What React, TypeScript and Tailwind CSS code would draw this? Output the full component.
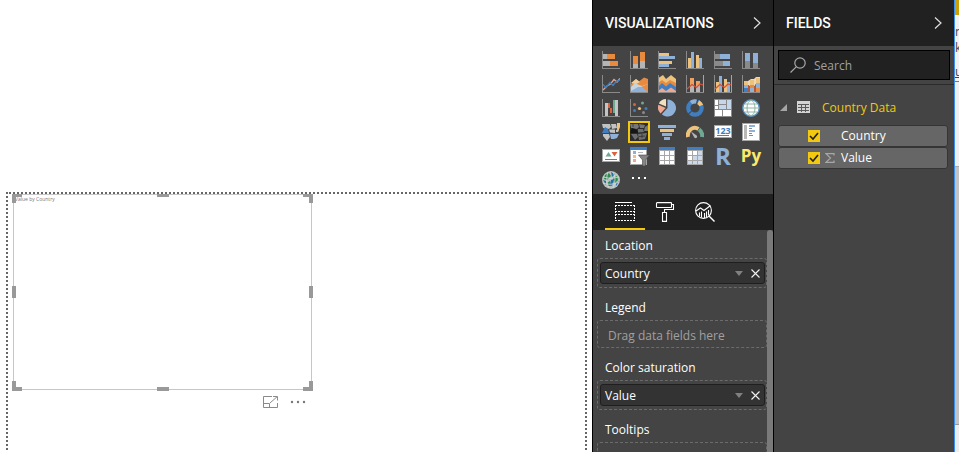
import React, { useState, type ReactNode } from "react";

type BoxSpec = [number, number, number, number, string];

const GRAY = "#8a8a8a";
const SILVER = "#b5b5b5";
const ORANGE = "#e88b3f";
const SAND = "#ecc27c";
const SKY = "#8fb1d8";
const BLUE = "#3f7fc1";
const RED = "#d9623f";
const SALMON = "#eda893";
const GREEN = "#6fa893";

function Boxes({ items }: { items: BoxSpec[] }) {
  return (
    <g shapeRendering="crispEdges">
      {items.map(([x, y, w, h, fill], i) => (
        <rect key={i} x={x} y={y} width={w} height={h} fill={fill} />
      ))}
    </g>
  );
}

function Glyph({ axes, children }: { axes?: boolean; children: ReactNode }) {
  return (
    <svg viewBox="0 0 18 18" className="block size-[18px] shrink-0" fill="none" aria-hidden="true">
      {children}
      {axes && <Boxes items={[[0, 0, 1, 18, GRAY], [0, 17, 18, 1, GRAY]]} />}
    </svg>
  );
}

const chart = (items: BoxSpec[], extra?: ReactNode) => (
  <Glyph axes>
    <Boxes items={items} />
    {extra}
  </Glyph>
);

const comboLine = (
  <>
    <path d="M1 14 L6 9.5 L10.5 12.5 L14 9 L17 10" stroke="#dd4f36" strokeWidth="1.2" />
    <Boxes items={[[17, 0, 1, 17, "#e0965a"]]} />
  </>
);

function SheetGrid({ shaded }: { shaded?: boolean }) {
  return (
    <Glyph>
      <Boxes
        items={[
          [1, 0, 16, 18, "#a6a6a6"],
          [1, 0, 16, 3, BLUE],
          ...[2, 7, 12].flatMap((x) =>
            [4, 9, 14].map(
              (y): BoxSpec => [x, y, 4, y === 14 ? 3 : 4, shaded && (x + y > 15) ? "#ccd9ea" : "#ffffff"],
            ),
          ),
        ]}
      />
    </Glyph>
  );
}

const visuals: { name: string; art: ReactNode; selected?: boolean }[] = [
  {
    name: "Stacked bar chart",
    art: chart([[1, 3, 4, 5, SILVER], [5, 3, 8, 5, ORANGE], [1, 10, 7, 5, SILVER], [8, 10, 8, 5, ORANGE]]),
  },
  {
    name: "Stacked column chart",
    art: chart([[3, 5, 5, 8, ORANGE], [3, 13, 5, 4, SILVER], [10, 1, 5, 9, ORANGE], [10, 10, 5, 7, SILVER]]),
  },
  {
    name: "Clustered bar chart",
    art: chart([[1, 2, 10, 3, SAND], [1, 5, 16, 3, SKY], [1, 10, 13, 3, SAND], [1, 13, 10, 3, SKY]]),
  },
  {
    name: "Clustered column chart",
    art: chart([[2, 7, 3, 10, SAND], [5, 1, 3, 16, SKY], [10, 4, 3, 13, SAND], [13, 7, 3, 10, SKY]]),
  },
  {
    name: "100% stacked bar chart",
    art: chart([[1, 3, 5, 5, GRAY], [6, 3, 10, 5, SKY], [1, 10, 8, 5, GRAY], [9, 10, 7, 5, SKY]]),
  },
  {
    name: "100% stacked column chart",
    art: chart([[3, 2, 5, 8, SKY], [3, 10, 5, 7, GRAY], [11, 2, 5, 10, SKY], [11, 12, 5, 5, GRAY]]),
  },
  {
    name: "Line chart",
    art: chart(
      [],
      <>
        <path d="M1 15 L5 11 L8.5 9 L12 4.5 L15 7 L18 3.5" stroke="#e2a18f" strokeWidth="1.4" />
        <path d="M1 9.5 L4 12.5 L8 7.5 L11 10.5 L14 6.5 L18 5" stroke={BLUE} strokeWidth="1.4" />
      </>,
    ),
  },
  {
    name: "Area chart",
    art: chart(
      [],
      <>
        <path d="M1 9 L6 4 L9 6.5 L14 2.5 L18 4 V17 H1Z" fill={ORANGE} />
        <path d="M1 8 L6 4 L10 7 L6 9Z" fill="#f3cf9b" />
        <path d="M1 12 L5 8 L9 10 L12 11 L18 9 V17 H1Z" fill="#c6d4e0" />
        <path d="M11 12 L18 9 V17 H15Z" fill={ORANGE} />
        <path d="M1 16 L8 12 L12 12 L18 17 H1Z" fill={SKY} />
      </>,
    ),
  },
  {
    name: "Stacked area chart",
    art: (
      <Glyph>
        <path d="M-1 4 L5 0 L8 4 L13 0 L18 4 V17 H0Z" fill={SAND} />
        <path d="M0 8 L4 5 L8 8 L12 5 L18 8 V17 H0Z" fill={ORANGE} />
        <path d="M0 12 L4 8 L8 11.5 L12 8 L18 12 V17 H0Z" fill={BLUE} />
        <path d="M0 16 L4 13 L8 16 L13 12.5 L18 16 V17 H0Z" fill={SALMON} />
        <Boxes items={[[0, 0, 1, 18, GRAY], [0, 17, 18, 1, GRAY]]} />
      </Glyph>
    ),
  },
  {
    name: "Line and stacked column chart",
    art: chart([[4, 3, 4, 8, "#f0a05f"], [4, 11, 4, 6, SILVER], [10, 6, 4, 5, "#f0a05f"], [10, 11, 4, 6, SILVER]], comboLine),
  },
  {
    name: "Line and clustered column chart",
    art: chart([[2, 7, 3, 10, SAND], [5, 1, 3, 16, SKY], [10, 4, 3, 13, SAND], [13, 7, 3, 10, SKY]], comboLine),
  },
  {
    name: "Ribbon chart",
    art: chart(
      [],
      <>
        <path d="M2 6 H6 L9 4 H12 L14 2 H18 V9 H14 L12 12 H9 L6 10 H2Z" fill="#f0d9b0" />
        <path d="M2 10 H6 L9 12 H12 L14 9 H18 V17 H2Z" fill="#b0573c" />
        <Boxes
          items={[
            [2, 6, 4, 4, SAND], [2, 10, 4, 3, SKY], [2, 13, 4, 4, BLUE],
            [8, 5, 4, 5, SAND], [8, 10, 4, 3, ORANGE], [8, 13, 4, 4, SKY],
            [14, 3, 4, 5, SAND], [14, 8, 4, 5, SKY], [14, 13, 4, 4, ORANGE],
          ]}
        />
      </>,
    ),
  },
  {
    name: "Waterfall chart",
    art: chart([
      [3, 4, 3, 13, "#c4c4c4"], [6, 4, 2, 5, RED], [8, 9, 2, 5, RED], [11, 1, 2, 13, GREEN], [13, 1, 3, 16, "#c4c4c4"],
    ]),
  },
  {
    name: "Scatter chart",
    art: chart(
      [],
      <>
        <circle cx="4.5" cy="5.5" r="1.5" fill={RED} />
        <circle cx="12.5" cy="4" r="1.5" fill={GREEN} />
        <circle cx="9.5" cy="9.5" r="1.6" fill={SAND} />
        <circle cx="16" cy="9.5" r="1.5" fill={BLUE} />
        <circle cx="4.5" cy="11.5" r="1.5" fill={BLUE} />
        <circle cx="13.5" cy="13.5" r="1.5" fill={GRAY} />
      </>,
    ),
  },
  {
    name: "Pie chart",
    art: (
      <Glyph>
        <path d="M9.5 9 V0.5 A8.5 8.5 0 1 1 3.8 15.3Z" fill={SKY} />
        <path d="M8 7.5 L0.8 4.5 A8.2 8.2 0 0 1 8 0Z" fill="#f2dfc0" />
        <path d="M7.7 9 L2.6 14.5 A8.3 8.3 0 0 1 0.4 5.8Z" fill={SALMON} />
      </Glyph>
    ),
  },
  {
    name: "Donut chart",
    art: (
      <Glyph>
        <circle cx="9" cy="9" r="6.7" stroke={BLUE} strokeWidth="4.2" strokeDasharray="15.5 1" />
        <path d="M5 3.6 A6.7 6.7 0 0 1 10.5 2.5" stroke={SKY} strokeWidth="4.2" />
        <path d="M12.2 3.1 A6.7 6.7 0 0 1 15.2 6.5" stroke={SAND} strokeWidth="4.2" />
        <path d="M11.9 0 L10.6 5" stroke="#444" strokeWidth="1" />
      </Glyph>
    ),
  },
  {
    name: "Treemap",
    art: (
      <Glyph>
        <Boxes
          items={[
            [0, 0, 18, 18, "#8a8a8a"], [1, 1, 3, 5, "#fff"], [1, 7, 3, 3, "#fff"], [5, 1, 7, 4, "#c6d7ec"],
            [5, 6, 7, 4, "#c6d7ec"], [13, 1, 4, 9, "#c6d7ec"], [1, 11, 7, 6, "#fff"], [9, 11, 8, 6, "#fff"],
          ]}
        />
      </Glyph>
    ),
  },
  {
    name: "Map",
    art: (
      <Glyph>
        <circle cx="9" cy="9" r="8.2" fill="#fff" stroke="#5b92bb" strokeWidth="1.4" />
        <g stroke="#8fb5a6" strokeWidth="1">
          <ellipse cx="9" cy="9" rx="4" ry="7.5" />
          <path d="M1.5 9 H16.5 M3 5 H15 M3 13 H15" />
        </g>
      </Glyph>
    ),
  },
  {
    name: "Filled map",
    art: (
      <Glyph>
        <path d="M0 1 H8 L9 4 L7 6 L1 5Z M9 1 H14 L15 5 L10 6Z M1 11 L7 11 L8 14 L5 18 L1 13Z M14 7 L17 6 L16 9 L14 9Z" fill="#c2c2c2" />
        <path d="M0 10 L3 4 L6 6 L7 10Z" fill={BLUE} />
        <path d="M7 6.5 H13 V10 L8 9.5Z" fill="#c2c2c2" />
        <path d="M8 11 L13 11 L17 11 L15 15 L12 16 L9 16Z" fill={SKY} />
        <path d="M15 0 H18 V4 L16 9 L15 6Z" fill={SAND} />
      </Glyph>
    ),
  },
  {
    name: "Shape map",
    selected: true,
    art: (
      <Glyph>
        <path d="M0 1 H8 L9 4 L7 6 L1 5Z M9 1 L15 2 L14 5 L10 5Z M15 4 L18 2 V8 L14 8Z" fill="#777" />
        <path d="M0 10 L2 5 L7 7 L8 10Z" fill="#151515" />
        <path d="M8 6 H13 L14 9 L8 9.5Z M1 11 L7 11 L8 14 L5 17Z M8 11 L17 10 L15 16 L9 17Z" fill="#6e6e6e" />
        <path d="M3 1 V4 M12 11 V15 M9 13.5 L15 13" stroke="#303030" strokeWidth="0.8" />
      </Glyph>
    ),
  },
  {
    name: "Funnel",
    art: (
      <Glyph>
        <Boxes items={[[0, 2, 18, 3, SKY], [2, 6, 14, 3, SAND], [4, 10, 10, 3, SKY], [6, 14, 6, 3, SKY]]} />
      </Glyph>
    ),
  },
  {
    name: "Gauge",
    art: (
      <Glyph>
        <path d="M2 14 A7 7.5 0 0 1 12.5 6" stroke={SAND} strokeWidth="4" />
        <path d="M13 6.3 A7 7.5 0 0 1 16 14" stroke={GREEN} strokeWidth="4" />
        <path d="M5 8.5 L10 12 A1.6 1.6 0 1 1 8 14Z" fill={SILVER} />
      </Glyph>
    ),
  },
  {
    name: "Card",
    art: (
      <Glyph>
        <Boxes items={[[0, 2, 18, 13, "#a6a6a6"], [1, 3, 16, 11, "#fff"], [3, 12, 12, 1, "#777"]]} />
        <text x="9" y="11" fontSize="9" fontWeight="700" textAnchor="middle" fill={BLUE} fontFamily="Open Sans, sans-serif">
          123
        </text>
      </Glyph>
    ),
  },
  {
    name: "Multi-row card",
    art: (
      <Glyph>
        <Boxes
          items={[
            [0, 0, 18, 18, "#a6a6a6"], [1, 1, 16, 16, "#fff"], [2, 2, 3, 14, "#b8b8b8"], [7, 2, 6, 2, SKY],
            [7, 5, 3, 1, GRAY], [7, 7, 6, 2, SKY], [7, 10, 3, 1, GRAY], [7, 12, 4, 1, GRAY],
          ]}
        />
      </Glyph>
    ),
  },
  {
    name: "KPI",
    art: (
      <Glyph>
        <Boxes items={[[0, 2, 18, 13, "#a6a6a6"], [1, 3, 16, 11, "#fff"], [3, 12, 12, 1, "#777"]]} />
        <path d="M3.5 9.5 L6.5 5 L9.5 9.5Z" fill={GREEN} />
        <path d="M9.5 5 H15.5 L12.5 9.5Z" fill={RED} />
      </Glyph>
    ),
  },
  {
    name: "Slicer",
    art: (
      <svg viewBox="0 0 20 19" className="-mr-0.5 -mb-px block h-[19px] w-5 shrink-0" aria-hidden="true">
        <Boxes
          items={[
            [0, 0, 17, 18, "#a6a6a6"], [1, 3, 15, 14, "#fff"], [0, 0, 17, 3, BLUE], [3, 4, 3, 3, SKY],
            [3, 8, 3, 3, SAND], [3, 12, 3, 3, SALMON], [8, 5, 5, 1, SILVER],
          ]}
        />
        <path d="M8.5 8 H19.5 L15.5 13 V19 H12.5 V13Z" fill="#858585" stroke="#444" strokeWidth="0.6" />
      </svg>
    ),
  },
  { name: "Table", art: <SheetGrid /> },
  { name: "Matrix", art: <SheetGrid shaded /> },
  { name: "R script visual", art: <span className="text-[24px] leading-[18px] font-bold text-[#8fb1d8]">R</span> },
  { name: "Python visual", art: <span className="text-[17px] leading-[18px] font-bold text-[#fbe96b]">Py</span> },
  {
    name: "ArcGIS map",
    art: (
      <Glyph>
        <circle cx="9" cy="9" r="9" fill="#b9c0c0" />
        <path d="M3 4 L7 2 L9 5 L5 9 L2 8Z M11 7 L15 5 L16 9 L12 13Z M5 12 L8 10 L9 15 L6 15Z" fill="#2f8a50" />
        <path d="M9 1 L13 3 L10 6Z M1 9 L4 10 L4 14Z M9 9 L12 8 L10 15 L8 14Z M14 12 L17 10 L14 15Z" fill="#2471a8" />
        <g stroke="#d5dada" strokeWidth="0.8">
          <path d="M1 6 Q9 9 17 6 M1 12 Q9 15 17 11 M6 1 Q3 9 7 17 M11 1 Q15 8 11 17" />
        </g>
      </Glyph>
    ),
  },
  {
    name: "Import custom visual",
    art: (
      <Glyph>
        <Boxes items={[[2, 6, 2, 2, "#fff"], [8, 6, 2, 2, "#fff"], [14, 6, 2, 2, "#fff"]]} />
      </Glyph>
    ),
  },
];

function Chevron() {
  return (
    <svg viewBox="0 0 8 12" className="h-3 w-2" fill="none" stroke="#e0e0e0" strokeWidth="1.2" aria-hidden="true">
      <path d="M1 0.5 L7 6 L1 11.5" />
    </svg>
  );
}

function PaneHeader({ title }: { title: string }) {
  return (
    <header className="flex h-[46px] shrink-0 items-center justify-between bg-[#212121] px-3">
      <h2 className="font-['Roboto',sans-serif] text-[14px] leading-5 font-medium text-white">{title}</h2>
      <button type="button" aria-label={`Collapse ${title}`} className="flex">
        <Chevron />
      </button>
    </header>
  );
}

const tabs = [
  {
    name: "Fields",
    art: (
      <svg viewBox="0 0 20 20" className="size-5" fill="none" stroke="#fff" shapeRendering="crispEdges" aria-hidden="true">
        <path d="M0 0.5 H17" />
        <path d="M0.5 3 V19 M19.5 3 V19" strokeDasharray="2 1" />
        <path d="M0 3.5 H20 M0 9.5 H20 M0 12.5 H20 M0 18.5 H20" strokeDasharray="2 1" />
      </svg>
    ),
  },
  {
    name: "Format",
    art: (
      <svg viewBox="0 0 20 20" className="size-5" fill="none" stroke="#fff" strokeWidth="1.1" aria-hidden="true">
        <rect x="1.5" y="0.6" width="15" height="4.9" rx="0.6" />
        <path d="M16.5 2.5 H18.5 V7.5 H9.5 V10.5" />
        <path d="M7.5 10.5 H11.5 V19.4 H7.5Z" />
      </svg>
    ),
  },
  {
    name: "Analytics",
    art: (
      <svg viewBox="0 0 20 20" className="size-5" fill="none" stroke="#fff" strokeWidth="1.1" aria-hidden="true">
        <circle cx="8.5" cy="8.5" r="7.9" />
        <path d="M14 14 L19.5 19.5" strokeWidth="1.4" />
        <path d="M1 9 L5.5 6 L9 8.5 L15.5 3.5" />
        <path d="M4.5 10.5 V14.5 M6.5 9.5 V15.5 M9.5 11 V16 M11.5 9.5 V15.5 M13.5 8 V13.5" />
      </svg>
    ),
  },
];

function Bucket({ label, field, hint }: { label: string; field?: string; hint?: string }) {
  return (
    <section className="pt-2.5">
      <h3 className="pl-3 text-[12px] leading-5 text-white">{label}</h3>
      <div className="mt-0.5 ml-1 min-h-7 rounded-[3px] border border-dashed border-[#6b6b6b]">
        {field && (
          <div className="my-[3px] mr-px ml-0.5 flex h-[22px] items-center rounded-[3px] border border-[#1f1f1f] bg-[#333] px-1">
            <span className="flex-1 pt-0.5 text-[12px] leading-[18px] text-white">{field}</span>
            <button type="button" aria-label={`${field} options`} className="mr-2">
              <svg viewBox="0 0 8 5" className="h-[5px] w-2" aria-hidden="true">
                <path d="M0 0 H8 L4 5Z" fill="#808080" />
              </svg>
            </button>
            <button type="button" aria-label={`Remove ${field}`}>
              <svg viewBox="0 0 9 9" className="size-[9px]" stroke="#f2f2f2" strokeWidth="1.1" aria-hidden="true">
                <path d="M0.5 0.5 L8.5 8.5 M8.5 0.5 L0.5 8.5" />
              </svg>
            </button>
          </div>
        )}
        {hint && <p className="px-2.5 pt-[5px] pb-px text-[12px] leading-5 text-[#a0a0a0]">{hint}</p>}
      </div>
    </section>
  );
}

function VisualizationsPane() {
  return (
    <aside className="flex w-[182px] shrink-0 flex-col border-x border-black bg-[#444]">
      <PaneHeader title="VISUALIZATIONS" />
      <div className="grid h-[148px] shrink-0 grid-cols-[repeat(6,28px)] auto-rows-[24px] content-start pt-0.5 pl-1">
        {visuals.map((v) => (
          <button
            key={v.name}
            type="button"
            aria-label={v.name}
            className={
              v.selected
                ? "m-auto flex size-[22px] items-center justify-center border-2 border-[#f2c811] bg-[#2b2b2b]"
                : "m-auto flex size-[18px] items-center justify-center"
            }
          >
            {v.art}
          </button>
        ))}
      </div>
      <nav className="flex h-9 shrink-0 bg-[#212121] pl-3">
        {tabs.map((t, i) => (
          <button
            key={t.name}
            type="button"
            aria-label={t.name}
            className={
              i === 0
                ? "flex w-10 items-center justify-center border-b-2 border-[#f2c811] pt-0.5"
                : "flex w-10 items-center justify-center border-b-2 border-transparent pt-0.5"
            }
          >
            {t.art}
          </button>
        ))}
      </nav>
      <div className="flex min-h-0 flex-1">
        <div className="-mt-1 min-w-0 flex-1">
          <Bucket label="Location" field="Country" />
          <Bucket label="Legend" hint="Drag data fields here" />
          <Bucket label="Color saturation" field="Value" />
          <Bucket label="Tooltips" />
        </div>
        <div className="w-1.5 rounded-t-full bg-[#7a7a7a]" />
      </div>
    </aside>
  );
}

function FieldRow({ name, numeric }: { name: string; numeric?: boolean }) {
  const [checked, setChecked] = useState(true);
  return (
    <label className="flex h-[22px] items-center rounded-[3px] border border-[#353535] bg-[#666] pl-7">
      <input
        type="checkbox"
        checked={checked}
        onChange={() => setChecked(!checked)}
        className="peer sr-only"
      />
      <span className="ml-px flex size-3 items-center justify-center bg-[#8a8a8a] peer-checked:bg-[#f2c811]">
        <svg viewBox="0 0 10 10" className="size-2.5" fill="none" stroke="#222" strokeWidth="1.6" aria-hidden="true">
          <path d="M1 5 L4 8 L9 2" />
        </svg>
      </span>
      <span className="flex w-[21px] justify-center pr-1">
        {numeric && (
          <svg viewBox="0 0 10 10" className="ml-0.5 size-2.5" fill="none" stroke="#a8a8a8" strokeWidth="1.2" aria-hidden="true">
            <path d="M9 2.5 V0.6 H1 L5.5 5 L1 9.4 H9 V7.5" />
          </svg>
        )}
      </span>
      <span className="text-[12px] leading-5 text-white">{name}</span>
    </label>
  );
}

function FieldsPane() {
  return (
    <aside className="flex w-[180px] shrink-0 flex-col bg-[#444]">
      <PaneHeader title="FIELDS" />
      <div className="border-b border-[#2b2b2b] px-1 pt-1 pb-1">
        <label className="flex h-[30px] items-center gap-2 border border-black bg-[#212121] pl-[11px]">
          <svg viewBox="0 0 16 16" className="size-4 shrink-0" fill="none" stroke="#a8a8a8" strokeWidth="1.2" aria-hidden="true">
            <circle cx="10" cy="6" r="5.2" />
            <path d="M6.2 9.8 L0.5 15.5" />
          </svg>
          <input
            type="text"
            aria-label="Search"
            placeholder="Search"
            className="w-full min-w-0 bg-transparent pt-0.5 text-[12px] leading-5 text-white placeholder:text-[#a0a0a0] focus:outline-none"
          />
        </label>
      </div>
      <div className="pt-3 pr-[6px] pl-1">
        <button type="button" className="flex h-5 w-full items-center pl-0.5">
          <svg viewBox="0 0 7 7" className="size-[7px]" aria-hidden="true">
            <path d="M7 0 V7 H0Z" fill="#a6a6a6" />
          </svg>
          <svg viewBox="0 0 13 12" className="mr-3 ml-2.5 h-3 w-[13px]" aria-hidden="true">
            <Boxes
              items={[
                [0, 0, 13, 12, "#d4d4d4"],
                [1, 3, 11, 1, "#5a5a5a"], [1, 6, 11, 1, "#5a5a5a"], [1, 9, 11, 1, "#5a5a5a"],
                [4, 3, 1, 8, "#5a5a5a"], [8, 3, 1, 8, "#5a5a5a"],
              ]}
            />
          </svg>
          <span className="pt-0.5 text-[12px] leading-[18px] text-[#f2c811]">Country Data</span>
        </button>
        <div className="mt-2">
          <FieldRow name="Country" />
          <FieldRow name="Value" numeric />
        </div>
      </div>
    </aside>
  );
}

function Handles() {
  return (
    <>
      <span className="absolute -top-px -left-0.5 h-[9px] w-2.5 border-t-[3px] border-l-4 border-[#999]" />
      <span className="absolute -top-px -right-0.5 h-[9px] w-2.5 border-t-[3px] border-r-4 border-[#999]" />
      <span className="absolute -bottom-0.5 -left-0.5 h-2.5 w-2.5 border-b-4 border-l-4 border-[#999]" />
      <span className="absolute -right-0.5 -bottom-0.5 h-2.5 w-2.5 border-r-4 border-b-4 border-[#999]" />
      <span className="absolute inset-x-0 -top-px mx-auto h-[3px] w-3 bg-[#999]" />
      <span className="absolute inset-x-0 -bottom-0.5 mx-auto h-1 w-3 bg-[#999]" />
      <span className="absolute inset-y-0 -left-0.5 my-auto h-3 w-1 bg-[#999]" />
      <span className="absolute inset-y-0 -right-0.5 my-auto h-3 w-1 bg-[#999]" />
    </>
  );
}

function ReportCanvas() {
  return (
    <main className="flex min-w-0 flex-1 flex-col overflow-hidden bg-white pt-48 pr-[5px] pl-1.5">
      <div className="h-[330px] shrink-0 border-2 border-dotted border-[#666] pl-[5px]">
        <article className="w-[299px]">
          <div className="relative h-[196px] border border-[#c6c6c6]">
            <h1 className="pl-px text-[5px] leading-2 text-[#777]">Value by Country</h1>
            <Handles />
          </div>
          <div className="flex items-center justify-end gap-3 pt-1.5 pr-1.5">
            <button type="button" aria-label="Focus mode">
              <svg viewBox="0 0 15 12" className="h-3 w-[15px]" fill="none" stroke="#8a8a8a" aria-hidden="true">
                <path d="M9 0.5 H0.5 V11.5 H14.5 V7 M0.5 7.5 H6.5 V11.5 M7 7 L14 0.8 M10 0.5 H14.5 V4.5" />
              </svg>
            </button>
            <button type="button" aria-label="More options">
              <svg viewBox="0 0 16 4" className="h-1 w-4" fill="#777" aria-hidden="true">
                <circle cx="2" cy="2" r="1.2" />
                <circle cx="8" cy="2" r="1.2" />
                <circle cx="14" cy="2" r="1.2" />
              </svg>
            </button>
          </div>
        </article>
      </div>
    </main>
  );
}

function WindowEdge() {
  return (
    <div className="flex w-[5px] shrink-0 flex-col overflow-hidden border-l border-[#3b8ff0] bg-[#f2f2f2] text-[12px] text-[#444]">
      <div className="h-[15px] shrink-0 bg-[#c99f0a]" />
      <div className="flex h-[66px] shrink-0 flex-col pt-2">
        <span className="leading-[18px]">n</span>
        <span className="leading-[14px]">k</span>
        <span className="pt-2 leading-[18px] underline">u</span>
      </div>
      <div className="h-[86px] shrink-0 border-t border-b border-t-[#777] border-b-[#aaa] bg-[#f0f0f0]" />
      <div className="h-[258px] shrink-0 border-b border-[#999] bg-[#c3c3c3]" />
      <div className="flex-1 bg-[#ededed]" />
    </div>
  );
}

export default function App() {
  return (
    <div className="flex h-screen overflow-hidden font-['Open_Sans','Noto_Sans',sans-serif]">
      <ReportCanvas />
      <VisualizationsPane />
      <FieldsPane />
      <WindowEdge />
    </div>
  );
}
